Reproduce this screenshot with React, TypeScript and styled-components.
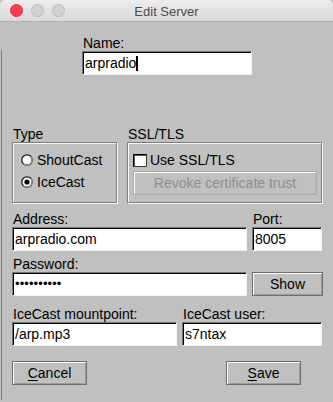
import React from "react";
import styled, { createGlobalStyle } from "styled-components";

const Global = createGlobalStyle`
  html, body { margin: 0; padding: 0; background: #c0c0c0; }
  body { font-family: "Liberation Sans", Arial, sans-serif; }
`;

const Window = styled.div`
  position: relative;
  width: 333px;
  height: 402px;
  background: #c0c0c0;
  display: flex;
  flex-direction: column;
  overflow: hidden;
  font-family: "Liberation Sans", Arial, sans-serif;
  font-size: 14px;
  color: #000;
  &::before {
    content: "";
    position: absolute;
    left: 1px;
    top: 50px;
    bottom: 2px;
    width: 1px;
    background: #7a7a7a;
  }
`;

const TitleBar = styled.div`
  height: 21px;
  flex: none;
  display: grid;
  grid-template-columns: 1fr auto 1fr;
  align-items: center;
  background: linear-gradient(#ededed, #d9d9d9);
  border-bottom: 1px solid #b3b3b3;
  border-radius: 5px 5px 0 0;
`;

const Lights = styled.div`
  display: flex;
  gap: 8px;
  padding-left: 10px;
`;

const Light = styled.span<{ $color: string; $edge: string }>`
  width: 11px;
  height: 11px;
  border-radius: 50%;
  background: ${(p) => p.$color};
  border: 0.5px solid ${(p) => p.$edge};
`;

const Title = styled.div`
  font-size: 13px;
  color: #4b4b4b;
  padding-top: 1px;
`;

const Body = styled.div`
  display: flex;
  flex-direction: column;
  padding: 13px 11px 0 12px;
`;

const Label = styled.div`
  height: 16px;
  line-height: 16px;
  padding-left: 1px;
  white-space: nowrap;
`;

const Field = styled.div<{ $w: number }>`
  box-sizing: border-box;
  width: ${(p) => p.$w}px;
  height: 24px;
  background: #fff;
  border: 1px solid;
  border-color: #767676 #f4f4f4 #f4f4f4 #767676;
  box-shadow: inset 1px 1px 0 #000;
  padding: 0 0 0 2px;
  display: flex;
  align-items: center;
  line-height: 16px;
  white-space: nowrap;
`;

const Dots = styled.span`
  font-size: 13px;
  letter-spacing: 0.1px;
`;

const Caret = styled.span`
  display: inline-block;
  width: 2px;
  height: 15px;
  background: #000;
  margin-left: 0;
`;

const NameBlock = styled.div`
  align-self: center;
  width: 170px;
  margin-left: 0px;
`;

const GroupsRow = styled.div`
  display: grid;
  grid-template-columns: 105px 195px;
  column-gap: 10px;
  margin-top: 51px;
`;

const Frame = styled.div`
  box-sizing: border-box;
  height: 61px;
  border: 1px solid #7d7d7d;
  box-shadow: inset 1px 1px 0 #fafafa, 1px 1px 0 #fafafa;
  padding: 6px 4px 0 5px;
  display: flex;
  flex-direction: column;
`;

const OptionRow = styled.div`
  height: 22px;
  display: flex;
  align-items: center;
  gap: 4px;
  white-space: nowrap;
`;

const RadioPad = styled.div`
  padding-left: 3px;
  display: flex;
  flex-direction: column;
`;

const Check = styled.span`
  box-sizing: border-box;
  width: 14px;
  height: 13px;
  background: #fff;
  border: 1px solid #3a3a3a;
  border-top-color: #000;
  border-left-color: #000;
  box-shadow: inset 1px 1px 0 #5a5a5a;
  margin-right: -1px;
`;

const Button = styled.div<{ $w: number; $disabled?: boolean }>`
  box-sizing: border-box;
  width: ${(p) => p.$w}px;
  height: 24px;
  display: flex;
  align-items: center;
  justify-content: center;
  border: 1px solid ${(p) => (p.$disabled ? "#a6a6a6" : "#6e6e6e")};
  box-shadow: inset 1px 1px 0 #ffffff, inset -1px -1px 0 ${(p) => (p.$disabled ? "#b8b8b8" : "#9c9c9c")};
  color: ${(p) => (p.$disabled ? "#8e8e8e" : "#000")};
  background: #c0c0c0;
  white-space: nowrap;
  line-height: 16px;
`;

const Under = styled.span`
  text-decoration: underline;
  text-underline-offset: 2px;
`;

const Grid2 = styled.div<{ $cols: string; $mt: number }>`
  display: grid;
  grid-template-columns: ${(p) => p.$cols};
  column-gap: 5px;
  margin-top: ${(p) => p.$mt}px;
`;

const Cell = styled.div`
  display: flex;
  flex-direction: column;
`;

const ButtonRow = styled.div`
  display: flex;
  justify-content: space-between;
  margin-top: 15px;
  padding-right: 21px;
`;

const Radio: React.FC<{ checked?: boolean }> = ({ checked }) => (
  <svg width="12" height="12" viewBox="0 0 12 12">
    <circle cx="6" cy="6" r="5.2" fill="#fff" stroke="#1a1a1a" strokeWidth="1.3" />
    <path d="M2.3 9.7 A5.2 5.2 0 0 0 9.7 2.3" fill="none" stroke="#9a9a9a" strokeWidth="1" />
    {checked && <circle cx="6" cy="6" r="2.6" fill="#000" />}
  </svg>
);

export default function App() {
  return (
    <>
      <Global />
      <Window>
        <TitleBar>
          <Lights>
            <Light $color="#fc3d4f" $edge="#e0303f" />
            <Light $color="#d2d2d2" $edge="#bcbcbc" />
            <Light $color="#d2d2d2" $edge="#bcbcbc" />
          </Lights>
          <Title>Edit Server</Title>
          <div />
        </TitleBar>
        <Body>
          <NameBlock>
            <Label>Name:</Label>
            <Field $w={170}>
              arpradio
              <Caret />
            </Field>
          </NameBlock>

          <GroupsRow>
            <Cell>
              <Label>Type</Label>
              <Frame>
                <RadioPad>
                  <OptionRow>
                    <Radio />
                    <span>ShoutCast</span>
                  </OptionRow>
                  <OptionRow>
                    <Radio checked />
                    <span>IceCast</span>
                  </OptionRow>
                </RadioPad>
              </Frame>
            </Cell>
            <Cell>
              <Label>SSL/TLS</Label>
              <Frame>
                <OptionRow>
                  <Check />
                  <span>Use SSL/TLS</span>
                </OptionRow>
                <Button $w={184} $disabled>
                  Revoke certificate trust
                </Button>
              </Frame>
            </Cell>
          </GroupsRow>

          <Grid2 $cols="235px 70px" $mt={8}>
            <Cell>
              <Label>Address:</Label>
              <Field $w={235}>arpradio.com</Field>
            </Cell>
            <Cell>
              <Label>Port:</Label>
              <Field $w={70}>8005</Field>
            </Cell>
          </Grid2>

          <Grid2 $cols="235px 70px" $mt={5}>
            <Cell>
              <Label>Password:</Label>
              <Field $w={235}>
                <Dots>••••••••••</Dots>
              </Field>
            </Cell>
            <Cell>
              <Label />
              <Button $w={71}>Show</Button>
            </Cell>
          </Grid2>

          <Grid2 $cols="165px 140px" $mt={10}>
            <Cell>
              <Label>IceCast mountpoint:</Label>
              <Field $w={165}>/arp.mp3</Field>
            </Cell>
            <Cell>
              <Label>IceCast user:</Label>
              <Field $w={140}>s7ntax</Field>
            </Cell>
          </Grid2>

          <ButtonRow>
            <Button $w={75}>
              <Under>C</Under>ancel
            </Button>
            <Button $w={75}>
              <Under>S</Under>ave
            </Button>
          </ButtonRow>
        </Body>
      </Window>
    </>
  );
}
